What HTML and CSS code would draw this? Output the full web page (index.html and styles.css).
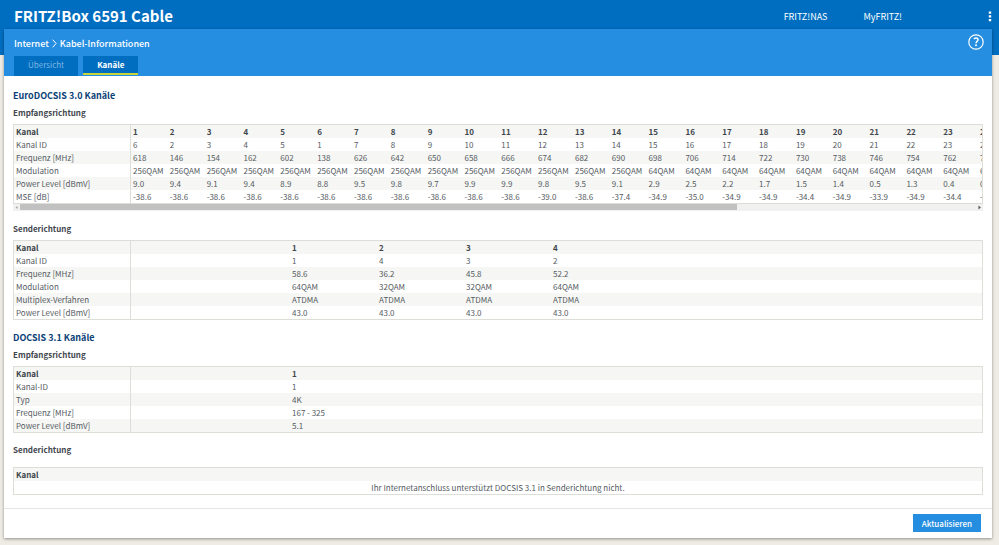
FILE: index.html
```
<!DOCTYPE html>
<html lang="de">
<head>
    <meta charset="utf-8">
    <title>FRITZ!Box 6591 Cable</title>
    <link rel="stylesheet" href="styles.css">
</head>
<body>
    <header class="topbar">
        <h1>FRITZ!Box 6591 Cable</h1>
        <nav class="topnav">
            <a href="#">FRITZ!NAS</a>
            <a href="#">MyFRITZ!</a>
            <button class="menu-button" aria-label="Menü">
                <svg width="4" height="12" viewBox="0 0 4 12"><path d="M.8 1.500h2.400v2.300h-2.400zM.8 5.200h2.400v2.300h-2.400zM.8 8.900h2.400v2.300h-2.400z" fill="#fff"/></svg>
            </button>
        </nav>
    </header>

    <main class="panel">
        <div class="panel-head">
            <div class="title-row">
                <div class="breadcrumb">
                    <a href="#">Internet</a>
                    <svg width="5" height="9" viewBox="0 0 5 9"><path d="M.7.7l3.4 3.8L.7 8.3" fill="none" stroke="#fff"/></svg>
                    <span>Kabel-Informationen</span>
                </div>
                <button class="help-button" aria-label="Hilfe">
                    <svg width="16" height="16" viewBox="0 0 16 16">
                        <circle cx="8" cy="8" r="7.2" fill="none" stroke="#fff" stroke-width="1.2"/>
                        <path d="M5.9 5.1c.6-.7 1.3-1 2.1-1 1.2 0 2 .7 2 1.7 0 1.600-2 1.700-1.900 3.400" fill="none" stroke="#fff" stroke-width="1.500"/>
                        <circle cx="8" cy="11.300" r="1" fill="#fff"/>
                    </svg>
                </button>
            </div>
            <nav class="tabs">
                <a href="#" class="tab">Übersicht</a>
                <a href="#" class="tab active">Kanäle</a>
            </nav>
        </div>

        <div class="content">
            <h2>EuroDOCSIS 3.0 Kanäle</h2>
            <h3>Empfangsrichtung</h3>
            <div class="scroll-box">
                <div class="scroll-view">
                    <table class="channels wide">
                        <colgroup><col class="name"><col span="24"></colgroup>
                        <tr><th>Kanal</th><th>1</th><th>2</th><th>3</th><th>4</th><th>5</th><th>6</th><th>7</th><th>8</th><th>9</th><th>10</th><th>11</th><th>12</th><th>13</th><th>14</th><th>15</th><th>16</th><th>17</th><th>18</th><th>19</th><th>20</th><th>21</th><th>22</th><th>23</th><th>24</th></tr>
                        <tr><td>Kanal ID</td><td>6</td><td>2</td><td>3</td><td>4</td><td>5</td><td>1</td><td>7</td><td>8</td><td>9</td><td>10</td><td>11</td><td>12</td><td>13</td><td>14</td><td>15</td><td>16</td><td>17</td><td>18</td><td>19</td><td>20</td><td>21</td><td>22</td><td>23</td><td>24</td></tr>
                        <tr><td>Frequenz [MHz]</td><td>618</td><td>146</td><td>154</td><td>162</td><td>602</td><td>138</td><td>626</td><td>642</td><td>650</td><td>658</td><td>666</td><td>674</td><td>682</td><td>690</td><td>698</td><td>706</td><td>714</td><td>722</td><td>730</td><td>738</td><td>746</td><td>754</td><td>762</td><td>770</td></tr>
                        <tr><td>Modulation</td><td>256QAM</td><td>256QAM</td><td>256QAM</td><td>256QAM</td><td>256QAM</td><td>256QAM</td><td>256QAM</td><td>256QAM</td><td>256QAM</td><td>256QAM</td><td>256QAM</td><td>256QAM</td><td>256QAM</td><td>256QAM</td><td>64QAM</td><td>64QAM</td><td>64QAM</td><td>64QAM</td><td>64QAM</td><td>64QAM</td><td>64QAM</td><td>64QAM</td><td>64QAM</td><td>64QAM</td></tr>
                        <tr><td>Power Level [dBmV]</td><td>9.0</td><td>9.4</td><td>9.1</td><td>9.4</td><td>8.9</td><td>8.8</td><td>9.5</td><td>9.8</td><td>9.7</td><td>9.9</td><td>9.9</td><td>9.8</td><td>9.5</td><td>9.1</td><td>2.9</td><td>2.5</td><td>2.2</td><td>1.7</td><td>1.5</td><td>1.4</td><td>0.5</td><td>1.3</td><td>0.4</td><td>0.4</td></tr>
                        <tr><td>MSE [dB]</td><td>-38.6</td><td>-38.6</td><td>-38.6</td><td>-38.6</td><td>-38.6</td><td>-38.6</td><td>-38.6</td><td>-38.6</td><td>-38.6</td><td>-38.6</td><td>-38.6</td><td>-39.0</td><td>-38.6</td><td>-37.4</td><td>-34.9</td><td>-35.0</td><td>-34.9</td><td>-34.9</td><td>-34.4</td><td>-34.9</td><td>-33.9</td><td>-34.9</td><td>-34.4</td><td>-34.4</td></tr>
                    </table>
                </div>
                <div class="scrollbar">
                    <svg width="7" height="7" viewBox="0 0 7 7"><path d="M4.500 2v3L2.500 3.500z" fill="#a3a3a3"/></svg>
                    <div class="track"><div class="thumb"></div></div>
                    <svg width="7" height="7" viewBox="0 0 7 7"><path d="M2.500 1.500v4L4.800 3.500z" fill="#505050"/></svg>
                </div>
            </div>

            <h3>Senderichtung</h3>
            <table class="channels">
                <colgroup><col class="name"><col class="gap"><col class="channel" span="3"><col></colgroup>
                <tr><th>Kanal</th><th></th><th>1</th><th>2</th><th>3</th><th>4</th></tr>
                <tr><td>Kanal ID</td><td></td><td>1</td><td>4</td><td>3</td><td>2</td></tr>
                <tr><td>Frequenz [MHz]</td><td></td><td>58.6</td><td>36.2</td><td>45.8</td><td>52.2</td></tr>
                <tr><td>Modulation</td><td></td><td>64QAM</td><td>32QAM</td><td>32QAM</td><td>64QAM</td></tr>
                <tr><td>Multiplex-Verfahren</td><td></td><td>ATDMA</td><td>ATDMA</td><td>ATDMA</td><td>ATDMA</td></tr>
                <tr><td>Power Level [dBmV]</td><td></td><td>43.0</td><td>43.0</td><td>43.0</td><td>43.0</td></tr>
            </table>

            <h2>DOCSIS 3.1 Kanäle</h2>
            <h3>Empfangsrichtung</h3>
            <table class="channels">
                <colgroup><col class="name"><col class="gap"><col></colgroup>
                <tr><th>Kanal</th><th></th><th>1</th></tr>
                <tr><td>Kanal-ID</td><td></td><td>1</td></tr>
                <tr><td>Typ</td><td></td><td>4K</td></tr>
                <tr><td>Frequenz [MHz]</td><td></td><td>167 - 325</td></tr>
                <tr><td>Power Level [dBmV]</td><td></td><td>5.1</td></tr>
            </table>

            <h3>Senderichtung</h3>
            <table class="channels empty">
                <tr><th>Kanal</th></tr>
                <tr><td>Ihr Internetanschluss unterstützt DOCSIS 3.1 in Senderichtung nicht.</td></tr>
            </table>
        </div>

        <footer class="panel-foot">
            <button class="refresh">Aktualisieren</button>
        </footer>
    </main>
</body>
</html>
```

FILE: styles.css
```
* {
    box-sizing: border-box;
}
body {
    margin: 0;
    background: #efece5;
    color: #555b62;
    font-family: "Noto Sans CJK SC", "Open Sans", sans-serif;
    font-size: 8px;
    line-height: 13px;
}
h1, h2, h3 {
    margin: 0;
}
a {
    color: inherit;
    text-decoration: none;
}
button {
    border: none;
    padding: 0;
    background: none;
    color: #fff;
    font: inherit;
    cursor: pointer;
}
svg {
    display: block;
}

/* top bar */
.topbar {
    display: flex;
    justify-content: space-between;
    align-items: flex-start;
    height: 55px;
    padding: 4px 7px 0 14px;
    background: #006ec0;
    color: #fff;
}
.topbar h1 {
    font-size: 15px;
    line-height: 24px;
}
.topnav {
    display: flex;
    align-items: center;
    gap: 36px;
    height: 24px;
    font-size: 9px;
}
.menu-button {
    margin-left: 50px;
}

/* panel */
.panel {
    position: relative;
    margin: -26px 7px 7px 4px;
    background: #fff;
    box-shadow: 0 1px 3px rgba(0, 0, 0, 0.4);
}
.panel-head {
    height: 47px;
    padding: 5px 8px 0 10px;
    background: #258ee1;
    color: #fff;
}
.title-row {
    display: flex;
    justify-content: space-between;
    height: 22px;
}
.breadcrumb {
    display: flex;
    align-items: center;
    gap: 3px;
    height: 18px;
    font-size: 9px;
    font-weight: 500;
}
.help-button {
    height: 16px;
}
.tabs {
    display: flex;
    gap: 5px;
}
.tab {
    height: 20px;
    padding: 2px 14px;
    background: #006ec0;
    color: #7db5e0;
}
.tab.active {
    height: 19px;
    border-bottom: 2px solid #c8d43c;
    color: #fff;
    font-weight: bold;
}

/* content */
.content {
    padding: 11px 9px 13px;
}
h2 {
    color: #0b3f77;
    font-size: 9px;
    font-weight: bold;
    line-height: 18px;
}
h3 {
    color: #3f464d;
    font-size: 8px;
    font-weight: bold;
    line-height: 16px;
    margin-bottom: 3px;
}
.scroll-box {
    margin-bottom: 10px;
}
.scroll-view {
    overflow: hidden;
    border-right: 1px solid #deded9;
}
.scrollbar {
    display: flex;
    height: 7px;
    background: #f1f1f1;
}
.track {
    flex: 1;
}
.thumb {
    width: 75%;
    height: 6px;
    background: #c1c1c1;
}
.channels {
    width: 100%;
    margin-bottom: 9px;
    border: 1px solid #deded9;
    border-spacing: 0;
    table-layout: fixed;
}
.channels.wide {
    width: 1003px;
    margin: 0;
}
.channels .name {
    width: 117px;
}
.channels .gap {
    width: 159px;
}
.channels .channel {
    width: 87px;
}
.channels th,
.channels td {
    height: 13px;
    padding: 0 2px;
    text-align: left;
    white-space: nowrap;
}
.channels th {
    color: #3f464d;
}
.channels tr:nth-child(odd) {
    background: #f6f6f4;
}
.channels tr > :first-child {
    border-right: 1px solid #deded9;
}
.channels.empty {
    margin: 9px 0 0;
}
.channels.empty tr > :first-child {
    border-right: none;
}
.channels.empty td {
    text-align: center;
}

/* footer */
.panel-foot {
    display: flex;
    justify-content: flex-end;
    padding: 5px 11px 6px;
    border-top: 1px solid #e6e6e6;
}
.refresh {
    height: 18px;
    padding: 0 9px;
    background: #258ee1;
    font-weight: 500;
}
```
